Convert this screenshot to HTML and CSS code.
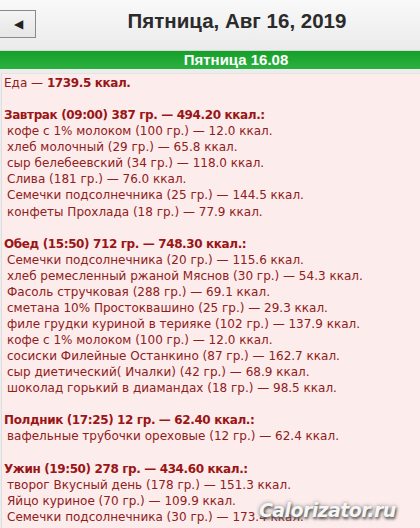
FILE: index.html
```html
<!DOCTYPE html>
<html>
<head>
<meta charset="utf-8">
<link rel="stylesheet" href="styles.css">
</head>
<body>
<div class="top">
  <div class="back">&#9664;</div>
  <div class="title">Пятница, Авг 16, 2019</div>
</div>
<div class="daybar">Пятница 16.08</div>
<div class="content">
  <div class="h">Еда — <b>1739.5 ккал.</b></div>
  <div class="blank"></div>
  <div class="h"><b>Завтрак (09:00) 387 гр. — 494.20 ккал.:</b></div>
  <div class="i">кофе с 1% молоком (100 гр.) — 12.0 ккал.</div>
  <div class="i">хлеб молочный (29 гр.) — 65.8 ккал.</div>
  <div class="i">сыр белебеевский (34 гр.) — 118.0 ккал.</div>
  <div class="i">Слива (181 гр.) — 76.0 ккал.</div>
  <div class="i">Семечки подсолнечника (25 гр.) — 144.5 ккал.</div>
  <div class="i">конфеты Прохлада (18 гр.) — 77.9 ккал.</div>
  <div class="blank"></div>
  <div class="h"><b>Обед (15:50) 712 гр. — 748.30 ккал.:</b></div>
  <div class="i">Семечки подсолнечника (20 гр.) — 115.6 ккал.</div>
  <div class="i">хлеб ремесленный ржаной Мяснов (30 гр.) — 54.3 ккал.</div>
  <div class="i">Фасоль стручковая (288 гр.) — 69.1 ккал.</div>
  <div class="i">сметана 10% Простоквашино (25 гр.) — 29.3 ккал.</div>
  <div class="i">филе грудки куриной в терияке (102 гр.) — 137.9 ккал.</div>
  <div class="i">кофе с 1% молоком (100 гр.) — 12.0 ккал.</div>
  <div class="i">сосиски Филейные Останкино (87 гр.) — 162.7 ккал.</div>
  <div class="i">сыр диетический( Ичалки) (42 гр.) — 68.9 ккал.</div>
  <div class="i">шоколад горький в диамандах (18 гр.) — 98.5 ккал.</div>
  <div class="blank"></div>
  <div class="h"><b>Полдник (17:25) 12 гр. — 62.40 ккал.:</b></div>
  <div class="i">вафельные трубочки ореховые (12 гр.) — 62.4 ккал.</div>
  <div class="blank"></div>
  <div class="h"><b>Ужин (19:50) 278 гр. — 434.60 ккал.:</b></div>
  <div class="i">творог Вкусный день (178 гр.) — 151.3 ккал.</div>
  <div class="i">Яйцо куриное (70 гр.) — 109.9 ккал.</div>
  <div class="i">Семечки подсолнечника (30 гр.) — 173.4 ккал.</div>
  <div class="watermark">Calorizator.ru</div>
</div>
</body>
</html>
```
FILE: styles.css
```css
html, body {
  margin: 0;
  padding: 0;
  height: 528px;
  overflow: hidden;
  background: #ececec;
}
.top {
  height: 50px;
  background: linear-gradient(#f9f9f9, #ebebeb);
  display: flex;
  align-items: center;
}
.back {
  box-sizing: border-box;
  width: 36px;
  height: 28px;
  margin-top: -3px;
  background: linear-gradient(#f4f4f4, #e6e6e6);
  border: 1px solid #8a8a8a;
  border-left: none;
  display: flex;
  align-items: center;
  justify-content: center;
  font-family: "DejaVu Sans", sans-serif;
  font-size: 12px;
  color: #222;
  padding-left: 2px;
}
.title {
  flex: 1;
  text-align: center;
  font-family: "Liberation Sans", Arial, sans-serif;
  font-weight: bold;
  font-size: 20.5px;
  color: #2b2b2b;
  margin-left: 18px;
  margin-top: -8px;
}
.daybar {
  height: 18px;
  border-top: 1px solid #d6d6d6;
  background: linear-gradient(#14a028, #2cb040);
  color: #fff;
  text-align: center;
  font-family: "Liberation Sans", Arial, sans-serif;
  font-weight: bold;
  font-size: 15px;
  line-height: 18px;
  padding-left: 52px;
}
.content {
  position: relative;
  margin-top: 4px;
  margin-left: 1px;
  border-left: 1px solid #dedede;
  border-top: 1px solid #e4e4e4;
  background: #fdecec;
  height: 460px;
  padding: 1px 0 0 2px;
  font-family: "DejaVu Sans", Tahoma, sans-serif;
  font-size: 12px;
  line-height: 16.07px;
  color: #8f2020;
  white-space: nowrap;
}
.content b {
  color: #9a1515;
  letter-spacing: -0.38px;
}
.blank {
  height: 16.07px;
}
.i {
  padding-left: 3px;
}
.watermark {
  position: absolute;
  left: 257px;
  top: 428px;
  font-family: "DejaVu Sans", sans-serif;
  font-weight: bold;
  font-style: italic;
  font-size: 19px;
  color: #f6f6f6;
  text-shadow: 1px 2px 3px #555, 0 0 4px #888;
  letter-spacing: -0.6px;
}
```
